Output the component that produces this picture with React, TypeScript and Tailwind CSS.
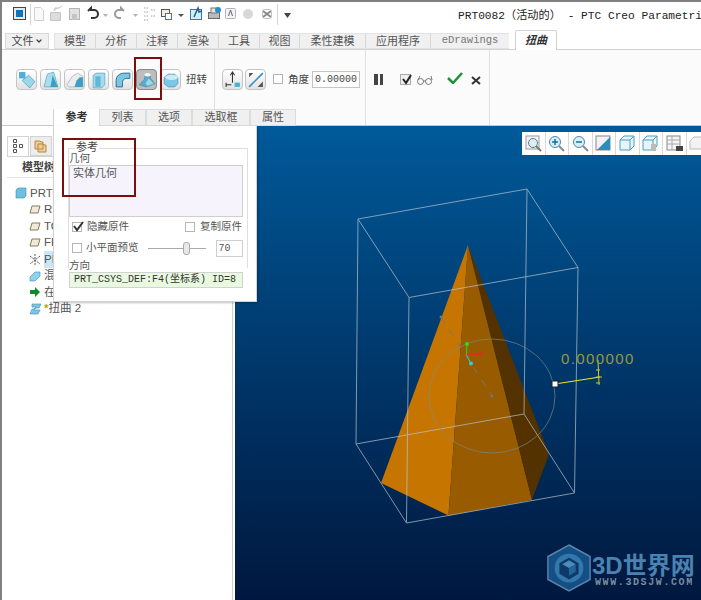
import { ChevronDown } from 'lucide-react'

const cjk = "font-['Liberation_Sans','Noto_Sans_CJK_SC',sans-serif]"
const mono = "font-['Liberation_Mono','Noto_Sans_CJK_SC',monospace]"

function Tab({ label, w }: { label: string; w: string }) {
  return (
    <div className={`${w} h-full flex items-center justify-center text-[11px] text-[#555] border-r border-[#d8d8d8]`}>
      {label}
    </div>
  )
}

function RibbonBtn({ active, children }: { active?: boolean; children: React.ReactNode }) {
  return (
    <div
      className={`w-[21px] h-[21px] rounded-[4px] border flex items-center justify-center ${
        active ? 'border-[#8a8a8a] bg-[#bdbdbd]' : 'border-[#c4c4c4] bg-gradient-to-b from-white to-[#e2e2e2]'
      }`}
    >
      <svg width="18" height="18" viewBox="0 0 17 17">{children}</svg>
    </div>
  )
}

function CheckBox({ checked }: { checked?: boolean }) {
  return (
    <div className="w-[10px] h-[10px] border border-[#b5b5b5] bg-white relative shrink-0">
      {checked && (
        <svg width="14" height="13" viewBox="0 0 14 13" className="absolute -top-[3px] -left-[1px]">
          <path d="M2 6l3 4 6-8" fill="none" stroke="#333" strokeWidth="2" />
        </svg>
      )}
    </div>
  )
}

function QuickBar() {
  return (
    <div className="h-[31px] relative">
      <svg width="290" height="24" viewBox="0 0 290 24" className="absolute left-[10px] top-0">
        <rect x="1.500" y="5.500" width="12" height="12" fill="#e8e8e8" stroke="#444" />
        <rect x="4" y="8" width="7" height="7" fill="#0b74c4" />
        <line x1="18.500" y1="2" x2="18.500" y2="23" stroke="#d4d4d4" />
        <path d="M22.500 5.500h6l3 3v10h-9z" fill="#fafafa" stroke="#d0d0d0" />
        <path d="M38.500 10.500h10v8h-10zM42 9l1-3h4l3-2" fill="#ddd" stroke="#c4c4c4" />
        <rect x="57.500" y="6.500" width="10" height="11" fill="#e2e2e2" stroke="#b4b4b4" />
        <rect x="60" y="12" width="5" height="6" fill="#c4c4c4" />
        <path d="M76 9l3-3v2h3a4 4 0 0 1 0 8h-3" fill="none" stroke="#333" strokeWidth="2" />
        <path d="M91 12h5l-2.500 3z" fill="#b4b4b4" />
        <path d="M112 9l-3-3v2h-2a4 4 0 0 0 0 8h2" fill="none" stroke="#9a9a9a" strokeWidth="2" />
        <path d="M121 12h5l-2.500 3z" fill="#b4b4b4" />
        <path d="M132 6h5M132 10h5M132 14h5M132 18h5M139 8h4M139 14h4" stroke="#a4a4a4" strokeDasharray="1.500 1" />
        <rect x="149.500" y="7.500" width="8" height="7" fill="#eee" stroke="#555" />
        <rect x="153.500" y="11.500" width="6" height="6" fill="#fff" stroke="#2a7fb8" />
        <path d="M166 12h6l-3 3z" fill="#555" />
        <rect x="178.500" y="7.500" width="11" height="10" fill="#d7ecf7" stroke="#2a7fb8" />
        <path d="M182 15l4-9 1 4 3-1" fill="none" stroke="#1a5f8e" strokeWidth="1.500" />
        <rect x="196.500" y="10.500" width="11" height="6" fill="#bbb" stroke="#666" />
        <rect x="199" y="6" width="6" height="5" fill="#e4e4e4" stroke="#777" />
        <circle cx="206" cy="8" r="3" fill="#2a8fc8" />
        <rect x="213.500" y="6.500" width="10" height="10" rx="1" fill="#f2f2f8" stroke="#b4b4b4" />
        <path d="M216.500 14l2-6 2 6" fill="none" stroke="#666" />
        <circle cx="236" cy="12" r="5" fill="#d8d8d8" />
        <path d="M251 9l8 6M259 9l-8 6" stroke="#8a8a8a" strokeWidth="2" fill="none" />
        <rect x="250.500" y="7.500" width="9" height="9" rx="2" fill="none" stroke="#c0c0c0" />
        <line x1="265.500" y1="2" x2="265.500" y2="23" stroke="#d4d4d4" />
        <path d="M272 11h7l-3.500 5z" fill="#444" />
      </svg>
      <div className={`absolute left-[456px] top-[6px] whitespace-nowrap text-[11.200px] text-[#222] ${mono}`}>
        PRT0082（活动的） - PTC Creo Parametric
      </div>
    </div>
  )
}

function TabRow() {
  return (
    <div className="h-[17px] flex items-stretch pl-[3px] border-b border-[#d2d2d2]">
      <div className="w-[44px] flex items-center justify-center gap-[1px] text-[11px] text-[#444] bg-[#f0f0f0] border border-[#d8d8d8]">
        文件 <ChevronDown size={8} strokeWidth={4} />
      </div>
      <div className="w-[5px]" />
      <div className="flex items-stretch bg-[#f0f0f0] border-y border-[#e2e2e2] border-l">
        <Tab label="模型" w="w-[41px]" />
        <Tab label="分析" w="w-[41px]" />
        <Tab label="注释" w="w-[41px]" />
        <Tab label="渲染" w="w-[41px]" />
        <Tab label="工具" w="w-[41px]" />
        <Tab label="视图" w="w-[40px]" />
        <Tab label="柔性建模" w="w-[66px]" />
        <Tab label="应用程序" w="w-[65px]" />
        <div className={`w-[78px] flex items-center justify-center text-[10.500px] text-[#777] ${mono}`}>eDrawings</div>
      </div>
      <div className="w-[6px]" />
      <div className="w-[42px] h-[20px] -mt-[3px] flex items-center justify-center text-[11px] italic font-bold text-[#333] bg-white border border-b-0 border-[#d2d2d2] rounded-t-[2px]">
        扭曲
      </div>
    </div>
  )
}

function Ribbon() {
  return (
    <div className="h-[76px] flex items-stretch border-b border-[#c8c8c8] bg-[#fbfbfb]">
      <div className="w-[213px] pl-[14px] pt-[19px] flex items-start gap-[3px] border-r border-[#e0e0e0]">
        <RibbonBtn>
          <rect x="1" y="1" width="6" height="6" fill="#49b0d6" />
          <path d="M4 9l6-5 6 6-5 6z" fill="#9bd8ec" stroke="#3a8fb5" strokeWidth=".6" />
        </RibbonBtn>
        <RibbonBtn>
          <path d="M2 15l3-12 6-2 4 14z" fill="#a9def0" stroke="#4b9dbd" strokeWidth=".6" />
          <path d="M8 15l2-11 5 11z" fill="#3d9fc5" />
        </RibbonBtn>
        <RibbonBtn>
          <path d="M1 13l5-8 5-3 5 3v10H3z" fill="#ececec" stroke="#aaa" strokeWidth=".6" />
          <path d="M8 15l2-6 3-3 3 0v9z" fill="#3d9fc5" />
        </RibbonBtn>
        <RibbonBtn>
          <path d="M3 4l3-2h8v11l-3 3H3z" fill="#a6dbee" stroke="#4b9dbd" strokeWidth=".6" />
          <rect x="5" y="5" width="5" height="10" fill="#5fb8da" />
        </RibbonBtn>
        <RibbonBtn>
          <path d="M2 15V9c0-4 3-7 8-7h5v5h-3c-3 0-4 2-4 4v4z" fill="#7cc8e4" stroke="#1d5f80" strokeWidth=".8" />
        </RibbonBtn>
        <RibbonBtn active>
          <path d="M1 13l5-5 1-5h4l1 4 4 5-8 3z" fill="#5fa9c8" stroke="#4b88a5" strokeWidth=".6" />
          <path d="M7 12l3-5 5 5-6 2z" fill="#9bd8ec" />
          <ellipse cx="9" cy="3.500" rx="3" ry="1.600" fill="#eef7fa" />
        </RibbonBtn>
        <RibbonBtn>
          <path d="M2 6l4-3h6l3 3v6l-3 3H6l-4-3z" fill="#7cc8e4" stroke="#3a8fb5" strokeWidth=".6" />
          <ellipse cx="9" cy="6" rx="6" ry="2.500" fill="#cdebf5" />
        </RibbonBtn>
        <div className="text-[10.500px] text-[#444] ml-[2px] h-[21px] flex items-center whitespace-nowrap">扭转</div>
      </div>
      <div className="pl-[7px] pt-[19px] flex items-start gap-[2px] w-[151px] border-r border-[#e0e0e0]">
        <RibbonBtn>
          <path d="M8 11V2M6 4l2-3 2 3M2 13h5M2 11v4" fill="none" stroke="#333" />
          <rect x="10" y="11" width="5" height="4" fill="#49b0d6" />
        </RibbonBtn>
        <RibbonBtn>
          <path d="M2 15L15 2" stroke="#2a8fc8" strokeWidth="1.500" />
          <path d="M2 2h4l-4 4zM15 15h-5l5-5z" fill="#555" />
        </RibbonBtn>
        <div className="ml-[5px] mt-[5px]">
          <CheckBox />
        </div>
        <div className="text-[10.500px] text-[#444] ml-[3px] h-[21px] flex items-center whitespace-nowrap">角度</div>
        <div className={`ml-px mt-[2px] w-[48px] h-[17px] border border-[#c4c4c4] bg-white text-[10px] leading-[15px] pl-[2px] text-[#444] ${mono}`}>
          0.00000
        </div>
      </div>
      <div className="w-[124px] pl-[8px] pt-[19px] flex items-start border-r border-[#e0e0e0]">
        <div className="flex gap-[2px] mt-[5px]">
          <div className="w-[3.500px] h-[11px] bg-[#444]" />
          <div className="w-[3.500px] h-[11px] bg-[#444]" />
        </div>
        <div className="ml-[17px] mt-[5px] relative w-[11px] h-[11px] border border-[#aaa] bg-[#eee]">
          <svg width="13" height="13" viewBox="0 0 13 13" className="absolute -top-[2px] left-0">
            <path d="M2 6l3 4 5-8" fill="none" stroke="#222" strokeWidth="2" />
          </svg>
        </div>
        <svg width="16" height="11" viewBox="0 0 16 11" className="ml-[6px] mt-[6px]">
          <circle cx="3.500" cy="6.500" r="3" fill="none" stroke="#777" />
          <circle cx="11.500" cy="6.500" r="3" fill="none" stroke="#777" />
          <path d="M6 6h3M1 5l2-4M15 5l-1-4" fill="none" stroke="#777" />
        </svg>
        <svg width="16" height="12" viewBox="0 0 16 12" className="ml-[14px] mt-[3px]">
          <path d="M1 6l5 5 9-10" fill="none" stroke="#1f8f3a" strokeWidth="2.500" />
        </svg>
        <svg width="10" height="9" viewBox="0 0 10 9" className="ml-[8px] mt-[7px]">
          <path d="M1 1l8 7M9 1L1 8" stroke="#333" strokeWidth="2" />
        </svg>
      </div>
    </div>
  )
}

function TreeRow({ icon, label, indent = 0, hl }: { icon: React.ReactNode; label: React.ReactNode; indent?: number; hl?: boolean }) {
  return (
    <div className="h-[16.500px] flex items-center text-[11.500px] text-[#555] whitespace-nowrap" style={{ paddingLeft: indent }}>
      <div className="w-[14px] h-[14px] flex items-center justify-center shrink-0">{icon}</div>
      <span className={`ml-[2px] ${hl ? 'bg-[#cbe6fa]' : ''}`}>{label}</span>
    </div>
  )
}

const planeIcon = (
  <svg width="12" height="9" viewBox="0 0 12 9">
    <path d="M3 1h8L9 8H1z" fill="#f2ead8" stroke="#8a7a5a" />
  </svg>
)

function Sidebar() {
  return (
    <div className="w-[231px] h-full bg-white border-r border-[#cfcfcf] pl-[5px] pt-[10px] mr-[2px]">
      <div className="h-[21px] flex items-stretch gap-[1px] border-b border-[#d2d2d2]">
        <div className="w-[22px] bg-white border border-b-0 border-[#d2d2d2] flex items-center justify-center">
          <svg width="11" height="15" viewBox="0 0 11 15">
            <path d="M0.500 0.500h3v3h-3zM0.500 5.500h3v3h-3zM0.500 10.500h3v3h-3zM6.500 5.500h3v3h-3z" fill="none" stroke="#555" />
          </svg>
        </div>
        <div className="w-[22px] bg-[#ededed] border border-[#d2d2d2] flex items-center justify-center">
          <svg width="14" height="14" viewBox="0 0 14 14">
            <path d="M1 2h5l1 1h2v7H1zM4 5h5l1 1h2v7H4z" fill="#f3cd8e" stroke="#b08a4a" />
          </svg>
        </div>
      </div>
      <div className="h-[21px] flex items-center pl-[15px] text-[11px] font-bold text-[#444] border-b border-[#e2e2e2]">模型树</div>
      <div className="pt-[7px]">
        <TreeRow
          indent={7}
          label="PRT0082.PRT"
          icon={
            <svg width="12" height="12" viewBox="0 0 12 12">
              <path d="M1 3l2-2h8v8l-2 2H1z" fill="#6fc0de" stroke="#3a8fb5" strokeWidth=".6" />
            </svg>
          }
        />
        <TreeRow indent={21} label="RIGHT" icon={planeIcon} />
        <TreeRow indent={21} label="TOP" icon={planeIcon} />
        <TreeRow indent={21} label="FRONT" icon={planeIcon} />
        <TreeRow
          indent={21}
          hl
          label="PRT_CSYS_DEF"
          icon={
            <svg width="12" height="13" viewBox="0 0 12 13">
              <path d="M6 1v11M1 3l10 8M11 3L1 11" stroke="#555" fill="none" strokeDasharray="2 1" />
            </svg>
          }
        />
        <TreeRow
          indent={21}
          label="混合 1"
          icon={
            <svg width="12" height="12" viewBox="0 0 12 12">
              <path d="M1 7l5-5h5v4L6 11H1z" fill="#8fd3ea" stroke="#3a8fb5" strokeWidth=".6" />
            </svg>
          }
        />
        <TreeRow
          indent={21}
          label="在此插入"
          icon={
            <svg width="10" height="10" viewBox="0 0 10 10">
              <path d="M0 3h5V0l5 5-5 5V7H0z" fill="#128a2c" />
            </svg>
          }
        />
        <TreeRow
          indent={21}
          label={
            <>
              <span className="text-[#b7a800] font-bold">*</span>扭曲 2
            </>
          }
          icon={
            <svg width="13" height="12" viewBox="0 0 13 12">
              <path d="M3 1h9l-2 4H6L5 7h6l-2 4H1l2-5h3l1-2H3z" fill="#7cc8e4" stroke="#3a8fb5" strokeWidth=".6" />
            </svg>
          }
        />
      </div>
    </div>
  )
}

function Scene() {
  // viewBox uses page coordinates, the canvas starts at x 235, y 126
  return (
    <svg width="466" height="474" viewBox="235 126 466 474" className="absolute left-0 top-0">
      <polygon points="468,245 381,483 448.500,515.500" fill="#c67600" />
      <polygon points="468,245 448.500,515.500 532,500" fill="#985b00" />
      <polygon points="468,245 532,500 549,454" fill="#533200" />
      <g fill="none" stroke="#b9c4cf" strokeWidth="1" opacity=".7">
        <path d="M358,219 L527,189 L578,267.500 L409,297.500 Z" />
        <path d="M356,444 L406.500,523 L574.500,493 L524,414 Z" />
        <path d="M358,219 L356,444 M527,189 L524,414 M578,267.500 L574.500,493 M409,297.500 L406.500,523" />
      </g>
      <ellipse cx="492" cy="396" rx="63" ry="57" fill="none" stroke="#7d8a8e" strokeWidth="1" opacity=".65" />
      <path d="M441,317 L492,396" stroke="#777" strokeDasharray="7 8" fill="none" />
      <circle cx="441" cy="317" r="1.500" fill="#777" />
      <circle cx="492" cy="396" r="1.500" fill="#777" />
      <path d="M466.500,355 L467,344" stroke="#22e022" />
      <circle cx="467" cy="344" r="2" fill="#22e022" />
      <path d="M466.500,355 L480,353.500" stroke="#e02a2a" />
      <circle cx="480" cy="353.500" r="1.800" fill="#e02a2a" />
      <path d="M466.500,355 L471,363.500" stroke="#2ad0e0" />
      <circle cx="471" cy="363.500" r="2" fill="#2ad0e0" />
      <path d="M555,384 L600,377" stroke="#e6e62a" strokeWidth="1.200" />
      <path d="M598,360 L599,385 M596,370h4M596,383h4M596,377h6" stroke="#c9c92a" fill="none" />
      <rect x="552" y="381" width="6" height="6" fill="#fff" stroke="#222" />
      <text x="561" y="364" fill="#98983a" fontSize="15" fontFamily="Liberation Sans, sans-serif" letterSpacing="1.400">
        0.000000
      </text>
    </svg>
  )
}

function ViewTools() {
  return (
    <div className="absolute left-[287px] top-[6px] w-[179px] h-[23px] bg-white flex items-stretch">
      {[0, 1, 2, 3, 4, 5, 6, 7].map((i) => (
        <div key={i} className="w-[23.500px] border-r border-[#d8d8d8] flex items-center justify-center shrink-0">
          <svg width="17" height="17" viewBox="0 0 17 17">
            {i === 0 && (
              <>
                <rect x="1" y="1" width="13" height="13" fill="#eef6fa" stroke="#999" />
                <circle cx="8" cy="8" r="4.500" fill="#d8eef8" stroke="#777" />
                <path d="M11 11l5 5" stroke="#777" strokeWidth="2" />
              </>
            )}
            {(i === 1 || i === 2) && (
              <>
                <circle cx="7" cy="7" r="5.500" fill="#d8eef8" stroke="#4a88a8" />
                <path d={i === 1 ? 'M4 7h6M7 4v6' : 'M4 7h6'} stroke="#1a6fa0" strokeWidth="1.500" />
                <path d="M11 11l5 5" stroke="#888" strokeWidth="2" />
              </>
            )}
            {i === 3 && (
              <>
                <rect x="1" y="1" width="14" height="14" fill="#f2f2f2" stroke="#888" />
                <path d="M2 15L15 2v13z" fill="#2a8fb8" />
              </>
            )}
            {(i === 4 || i === 5) && (
              <>
                <path d="M1 5l4-4h10v10l-4 4H1z" fill="#e6f5fb" stroke="#4a9dc0" />
                <path d="M1 5h10v10M11 5l4-4" fill="none" stroke="#4a9dc0" />
                {i === 5 && <rect x="9" y="9" width="5" height="7" fill="#bbb" />}
              </>
            )}
            {i === 6 && (
              <>
                <rect x="1" y="1" width="13" height="14" fill="#f4f4f4" stroke="#888" />
                <path d="M1 5h13M1 9h13M6 1v14" stroke="#aaa" />
                <rect x="10" y="11" width="7" height="5" fill="#444" />
              </>
            )}
            {i === 7 && <path d="M1 6l4-4h10v12H1z" fill="#f2f2f2" stroke="#bbb" />}
          </svg>
        </div>
      ))}
    </div>
  )
}

function Watermark() {
  return (
    <div className="absolute left-[311px] top-[418px] flex items-center opacity-80">
      <svg width="46" height="48" viewBox="0 0 48 50" className="shrink-0">
        <polygon points="24,1 46,13 46,37 24,49 2,37 2,13" fill="#1a5c96" stroke="#6f9fc4" strokeWidth="1.500" />
        <circle cx="24" cy="25" r="15" fill="#3f8fc4" />
        <polygon points="24,14 34,20 34,31 24,37 14,31 14,20" fill="#12406e" />
        <polygon points="24,17 31,21 24,25 17,21" fill="#5ea9d8" />
        <polygon points="24,25 31,21 31,29 24,33" fill="#2c78ad" />
      </svg>
      <div className="flex flex-col mt-[4px]">
        <div className="text-[24px] leading-[25px] font-bold text-[#5f9ccb] whitespace-nowrap">3D世界网</div>
        <div className="pl-[3px] text-[10px] leading-[9px] font-bold tracking-[1.6px] text-[#9aa9b5] whitespace-nowrap font-['Liberation_Mono',monospace]">WWW.3DSJW.COM</div>
      </div>
    </div>
  )
}

function Popup() {
  return (
    <div className="absolute left-[51px] top-[107px] w-[245px]">
      <div className="h-[17px] flex items-stretch text-[11px] text-[#555]">
        <div className="w-[46px] bg-white font-bold text-[#333] flex items-center justify-center border-l border-[#d2d2d2]">参考</div>
        <div className="w-[47px] bg-[#f0f0f0] border border-[#dcdcdc] flex items-center justify-center">列表</div>
        <div className="w-[46px] bg-[#f0f0f0] border border-[#dcdcdc] flex items-center justify-center">选项</div>
        <div className="w-[58px] bg-[#f0f0f0] border border-[#dcdcdc] flex items-center justify-center">选取框</div>
        <div className="w-[46px] bg-[#f0f0f0] border border-[#dcdcdc] flex items-center justify-center">属性</div>
      </div>
      <div className="w-[204px] h-[176px] bg-white border border-[#d2d2d2] border-t-0 shadow-[1px_1px_2px_rgba(0,0,0,0.25)] pl-[15px] pt-[25px] text-[10.500px] text-[#555] relative">
        <div className="absolute left-[14px] top-[22px] w-[180px] h-[120px] border-t border-r border-l border-[#dedede]" />
        <div className="absolute left-[21px] top-[14px] bg-white px-[1px] text-[11px] text-[#444] leading-[14px]">参考</div>
        <div className="relative leading-[14px]">几何</div>
        <div className="relative w-[174px] h-[52px] border border-[#cfcfcf] bg-[#f6f3fc] pl-[3px] leading-[15px] text-[11px]">实体几何</div>
        <div className="relative w-[174px] flex items-center justify-between h-[19px] pl-[3px] pr-[1px]">
          <div className="flex items-center gap-[5px]">
            <CheckBox checked /> <span>隐藏原件</span>
          </div>
          <div className="flex items-center gap-[5px]">
            <CheckBox /> <span>复制原件</span>
          </div>
        </div>
        <div className="relative flex items-center h-[20px] mt-[2px] pl-[3px] whitespace-nowrap">
          <CheckBox />
          <span className="ml-[4px]">小平面预览</span>
          <div className="ml-[9px] w-[58px] h-[1px] bg-[#aaa] relative shrink-0">
            <div className="absolute left-[35px] -top-[6px] w-[7px] h-[13px] rounded-[3px] border border-[#aaa] bg-[#e8e8e8]" />
          </div>
          <div className={`ml-[10px] w-[27px] h-[17px] border border-[#cfcfcf] text-[10px] leading-[15px] pl-[2px] shrink-0 ${mono}`}>70</div>
        </div>
        <div className="relative leading-[14px]">方向</div>
        <div className={`relative w-[174px] h-[16px] border border-[#d2d2d2] bg-[#e9f9df] pl-[4px] text-[10px] leading-[14px] whitespace-nowrap text-[#333] ${mono}`}>
          PRT_CSYS_DEF:F4(坐标系) ID=8
        </div>
      </div>
    </div>
  )
}

export default function App() {
  return (
    <div className={`relative w-[701px] h-[600px] overflow-hidden bg-white border-t-2 border-l-2 border-[#808080] ${cjk}`}>
      <QuickBar />
      <TabRow />
      <Ribbon />
      <div className="flex h-[474px]">
        <Sidebar />
        <div className="relative flex-1 bg-gradient-to-b from-[#005a9a] to-[#00183f] overflow-hidden">
          <Scene />
          <ViewTools />
          <Watermark />
        </div>
      </div>
      <Popup />
      {/* red callouts from the tutorial */}
      <div className="absolute left-[132px] top-[55px] w-[28px] h-[43px] border-2 border-[#7a0f0f]" />
      <div className="absolute left-[60px] top-[136px] w-[74px] h-[59px] border-2 border-[#7a0f0f]" />
    </div>
  )
}
